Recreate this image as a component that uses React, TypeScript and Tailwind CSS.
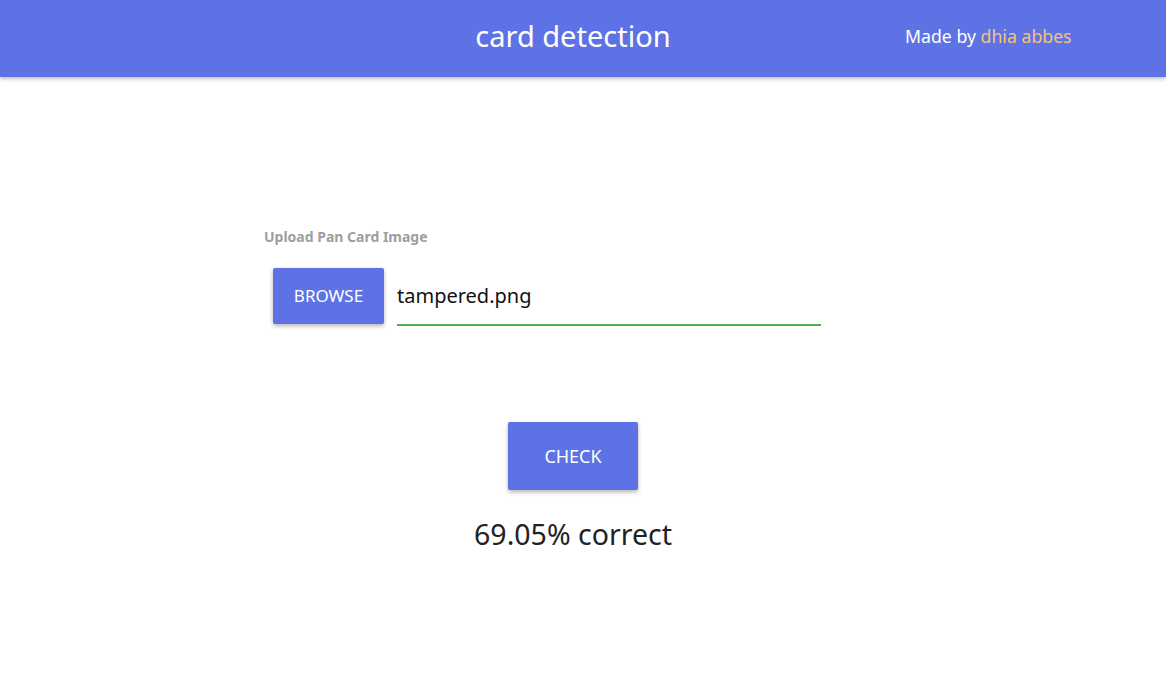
import React from "react";

export default function App() {
  const font = { fontFamily: '"Segoe UI", "Noto Sans", "Open Sans", sans-serif' };
  return (
    <div className="min-h-[690px] bg-white" style={font}>
      <header className="h-[77px] bg-[#5d73e5] shadow-[0_2px_4px_rgba(0,0,0,0.25)] flex items-center relative">
        <div className="flex-1 flex justify-center pr-[20px] pb-[6px]">
          <h1 className="text-[29px] text-white font-normal leading-none">card detection</h1>
        </div>
        <div className="absolute left-[905px] top-[28px] text-[17.7px] text-white leading-none">
          Made by <span className="text-[#f8c17d]">dhia abbes</span>
        </div>
      </header>
      <main className="flex flex-col">
        <div className="pl-[264px] pt-[153px]">
          <div className="text-[14px] font-bold text-[#9e9e9e] leading-none">Upload Pan Card Image</div>
          <div className="flex items-end mt-[23px] pl-[9px]">
            <button className="w-[111px] h-[56px] mb-[2px] bg-[#5d73e5] text-white text-[17px] rounded-[2px] shadow-[0_2px_4px_rgba(0,0,0,0.3)]">
              BROWSE
            </button>
            <div className="ml-[13px] w-[424px] h-[59px] border-b-2 border-[#4caf50] flex items-center">
              <span className="text-[20px] text-[#111]">tampered.png</span>
            </div>
          </div>
        </div>
        <div className="flex justify-center mt-[96px] pr-[20px]">
          <button className="w-[130px] h-[68px] bg-[#5d73e5] text-white text-[18px] rounded-[2px] shadow-[0_2px_4px_rgba(0,0,0,0.3)]">
            CHECK
          </button>
        </div>
        <div className="flex justify-center mt-[30px] pr-[20px]">
          <div className="text-[28.5px] text-[#222] leading-none">69.05% correct</div>
        </div>
      </main>
    </div>
  );
}
